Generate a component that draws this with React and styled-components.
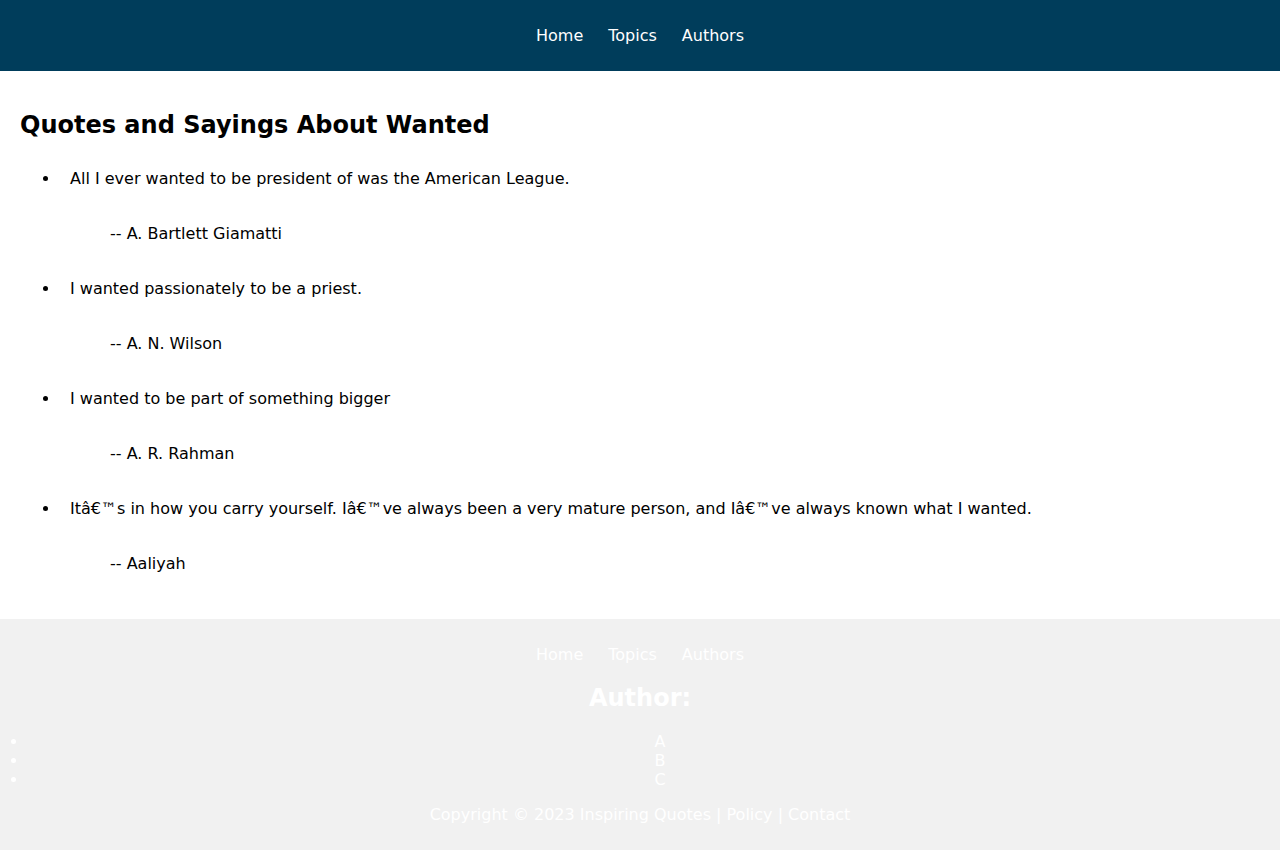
import styled, {createGlobalStyle} from "styled-components";

const GlobalStyle = createGlobalStyle`
    body {
        margin: 0;
        font-family: "DejaVu Sans", sans-serif;
        font-size: 16px;
        color: #000;
        background: #fff;
    }
`;

const Header = styled.header`
    background-color: #003d5b;
    padding: 26px 0;
`;

const Nav = styled.nav`
    display: flex;
    justify-content: center;
    gap: 25px;
    line-height: 19px;
`;

const NavLink = styled.a`
    color: #fff;
    text-decoration: none;
    cursor: pointer;
`;

const Main = styled.main`
    padding: 20px 20px 20px;
`;

const Title = styled.h2`
    font-size: 24px;
    line-height: 28px;
    margin: 20px 0;
`;

const QuoteList = styled.ul`
    margin: 0;
    padding-left: 40px;
`;

const QuoteItem = styled.li`
    padding: 10px;
    line-height: 19px;
`;

const QuoteText = styled.p`
    margin: 0;
`;

const Author = styled.p`
    margin: 36px 0 16px 40px;
`;

const Footer = styled.footer`
    background-color: #f1f1f1;
    color: #fff;
    padding: 26px 0;
    text-align: center;
    line-height: 19px;
`;

const FooterTitle = styled.h3`
    font-size: 24px;
    line-height: 28px;
    margin: 20px 0;
`;

const LetterList = styled.ul`
    margin: 0;
    padding-left: 28px;
`;

const Letter = styled.li`
    padding-left: 12px;
    text-align: center;
`;

const Copyright = styled.p`
    margin: 16px 0 0;
`;

const quotes = [
    {text: "All I ever wanted to be president of was the American League.", author: "A. Bartlett Giamatti"},
    {text: "I wanted passionately to be a priest.", author: "A. N. Wilson"},
    {text: "I wanted to be part of something bigger", author: "A. R. Rahman"},
    {
        text: "It\u00e2\u20ac\u2122s in how you carry yourself. I\u00e2\u20ac\u2122ve always been a very mature person, and I\u00e2\u20ac\u2122ve always known what I wanted.",
        author: "Aaliyah"
    },
];

const links = ["Home", "Topics", "Authors"];

const App = () => (
    <>
        <GlobalStyle/>
        <Header>
            <Nav>
                {links.map(l => <NavLink key={l}>{l}</NavLink>)}
            </Nav>
        </Header>
        <Main>
            <Title>Quotes and Sayings About Wanted</Title>
            <QuoteList>
                {quotes.map((q, i) => (
                    <QuoteItem key={i}>
                        <QuoteText>{q.text}</QuoteText>
                        <Author>-- {q.author}</Author>
                    </QuoteItem>
                ))}
            </QuoteList>
        </Main>
        <Footer>
            <Nav>
                {links.map(l => <NavLink key={l}>{l}</NavLink>)}
            </Nav>
            <FooterTitle>Author:</FooterTitle>
            <LetterList>
                {["A", "B", "C"].map(l => <Letter key={l}>{l}</Letter>)}
            </LetterList>
            <Copyright>Copyright © 2023 Inspiring Quotes | Policy | Contact</Copyright>
        </Footer>
    </>
);

export default App;
